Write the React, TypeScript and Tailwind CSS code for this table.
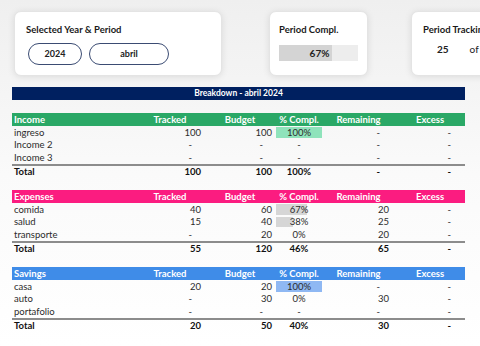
type Row = {
  name: string
  tracked: string
  budget: string
  pct: string
  fill: number
  remaining: string
  excess: string
}

type Section = {
  title: string
  head: string
  bar: string
  rows: Row[]
  total: Row
}

const sections: Section[] = [
  {
    title: "Income",
    head: "bg-[#2aa866]",
    bar: "bg-[#8fe3bb]",
    rows: [
      { name: "ingreso", tracked: "100", budget: "100", pct: "100%", fill: 100, remaining: "-", excess: "-" },
      { name: "Income 2", tracked: "-", budget: "-", pct: "-", fill: 0, remaining: "-", excess: "-" },
      { name: "Income 3", tracked: "-", budget: "-", pct: "-", fill: 0, remaining: "-", excess: "-" },
    ],
    total: { name: "Total", tracked: "100", budget: "100", pct: "100%", fill: 0, remaining: "-", excess: "-" },
  },
  {
    title: "Expenses",
    head: "bg-[#fb1c80]",
    bar: "bg-[#d6d6d6]",
    rows: [
      { name: "comida", tracked: "40", budget: "60", pct: "67%", fill: 67, remaining: "20", excess: "-" },
      { name: "salud", tracked: "15", budget: "40", pct: "38%", fill: 38, remaining: "25", excess: "-" },
      { name: "transporte", tracked: "-", budget: "20", pct: "0%", fill: 0, remaining: "20", excess: "-" },
    ],
    total: { name: "Total", tracked: "55", budget: "120", pct: "46%", fill: 0, remaining: "65", excess: "-" },
  },
  {
    title: "Savings",
    head: "bg-[#3f8ce8]",
    bar: "bg-[#8fb8f3]",
    rows: [
      { name: "casa", tracked: "20", budget: "20", pct: "100%", fill: 100, remaining: "-", excess: "-" },
      { name: "auto", tracked: "-", budget: "30", pct: "0%", fill: 0, remaining: "30", excess: "-" },
      { name: "portafolio", tracked: "-", budget: "-", pct: "-", fill: 0, remaining: "-", excess: "-" },
    ],
    total: { name: "Total", tracked: "20", budget: "50", pct: "40%", fill: 0, remaining: "30", excess: "-" },
  },
]

// right aligned number cell, a dash sits a bit further left like Excel accounting format
function Num({ v, w, pr, dash }: { v: string; w: string; pr: string; dash: string }) {
  return (
    <div className={`${w} text-right ${v === "-" ? dash : pr}`}>{v}</div>
  )
}

function DataRow({ r, bar, total }: { r: Row; bar: string; total?: boolean }) {
  return (
    <div
      className={`flex items-center text-[9.5px] leading-none ${
        total ? "h-[13px] border-t-2 border-[#8c8c8c] font-bold text-[#111]" : "h-[12.67px] text-[#2b2b2b]"
      }`}
    >
      <div className="w-[124px] pl-[2px]">{r.name}</div>
      <Num v={r.tracked} w="w-[68px]" pr="pr-[3px]" dash="pr-[12px]" />
      <Num v={r.budget} w="w-[72px]" pr="pr-[4px]" dash="pr-[13px]" />
      <div className="relative h-full w-[46px]">
        {r.fill > 0 && (
          <div className={`absolute inset-y-[1px] left-0 ${bar}`} style={{ width: `${r.fill}%` }} />
        )}
        <div className="relative flex h-full items-center justify-center">{r.pct}</div>
      </div>
      <Num v={r.remaining} w="w-[73px]" pr="pr-[6px]" dash="pr-[15px]" />
      <Num v={r.excess} w="w-[70px]" pr="pr-[5px]" dash="pr-[14px]" />
    </div>
  )
}

function Table({ s }: { s: Section }) {
  return (
    <div className="w-[453px]">
      <div className={`flex h-[13px] items-center text-[9.5px] font-bold leading-none text-white ${s.head}`}>
        <div className="w-[124px] pl-[2px]">{s.title}</div>
        <div className="w-[68px] text-center">Tracked</div>
        <div className="w-[72px] text-center">Budget</div>
        <div className="w-[46px] text-center">% Compl.</div>
        <div className="w-[73px] text-center">Remaining</div>
        <div className="w-[70px] text-center">Excess</div>
      </div>
      {s.rows.map((r) => (
        <DataRow key={r.name} r={r} bar={s.bar} />
      ))}
      <DataRow r={s.total} bar={s.bar} total />
    </div>
  )
}

export default function App() {
  return (
    <div
      className="h-[346px] w-[480px] overflow-hidden bg-gradient-to-b from-[#efefef] via-[#fafafa] to-white"
      style={{ fontFamily: "Lato, 'Open Sans', sans-serif" }}
    >
      <div className="flex pl-[14px] pt-[11px]">
        <div className="h-[65px] w-[208px] shrink-0 rounded-[7px] border border-[#e4e4e4] bg-white px-[11px] pt-[12px] shadow-[0_1px_7px_rgba(0,0,0,0.1)]">
          <p className="text-[9.5px] font-bold leading-[12px] text-[#1a1a1a]">Selected Year &amp; Period</p>
          <div className="mt-[7px] flex gap-[7px] pl-[2px]">
            <div className="flex h-[22px] w-[54px] items-center justify-center rounded-full border-[1.3px] border-[#3b4c73] text-[9px] font-bold text-[#222]">
              2024
            </div>
            <div className="flex h-[22px] w-[80px] items-center justify-center rounded-full border-[1.3px] border-[#3b4c73] text-[9px] font-bold text-[#222]">
              abril
            </div>
          </div>
        </div>

        <div className="ml-[47px] h-[65px] w-[99px] shrink-0 rounded-[7px] border border-[#e4e4e4] bg-white px-[9px] pt-[12px] shadow-[0_1px_7px_rgba(0,0,0,0.1)]">
          <p className="text-[9.5px] font-bold leading-[12px] text-[#1a1a1a]">Period Compl.</p>
          <div className="relative mt-[9px] h-[16px] w-[79px] bg-[#ededed]">
            <div className="absolute inset-y-0 left-0 bg-[#d4d4d4]" style={{ width: "67%" }} />
            <div className="relative flex h-full items-center justify-center pl-[2px] text-[10px] font-bold text-[#222]">
              67%
            </div>
          </div>
        </div>

        <div className="ml-[43px] h-[65px] w-[110px] shrink-0 rounded-[7px] border border-[#e4e4e4] bg-white pl-[11px] pt-[12px] shadow-[0_1px_7px_rgba(0,0,0,0.1)]">
          <p className="whitespace-nowrap text-[9.5px] font-bold leading-[12px] text-[#1a1a1a]">Period Tracking</p>
          <div className="mt-[8px] flex items-center pl-[14px] text-[10px] leading-none text-[#222]">
            <span className="font-bold">25</span>
            <span className="ml-[21px]">of</span>
          </div>
        </div>
      </div>

      <div className="ml-[12px] mt-[11px] flex h-[13px] w-[453px] items-center justify-center bg-[#002060] text-[8.5px] font-bold leading-none text-white">
        Breakdown - abril 2024
      </div>

      <div className="ml-[12px] mt-[13px] flex flex-col gap-[13px]">
        {sections.map((s) => (
          <Table key={s.title} s={s} />
        ))}
      </div>
    </div>
  )
}
